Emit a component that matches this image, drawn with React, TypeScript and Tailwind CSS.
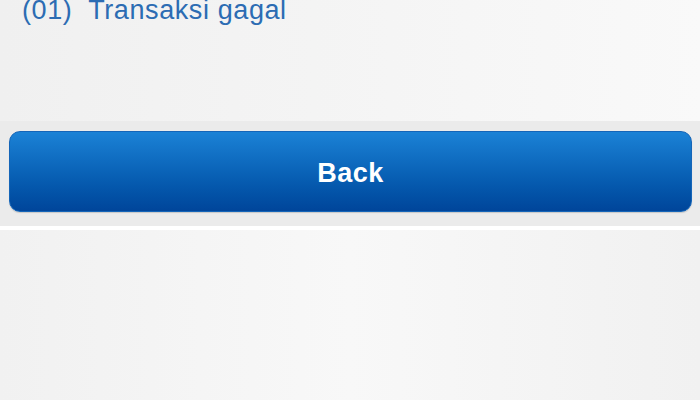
export default function App() {
  return (
    <div className="w-[700px] h-[400px] overflow-hidden flex flex-col bg-[#f7f7f7]" style={{ fontFamily: '"Liberation Sans", Arial, sans-serif' }}>
      <div className="h-[121px] bg-gradient-to-r from-[#f0f0f0] to-[#f9f9f9] pl-[22px]">
        <div className="text-[27px] leading-[27px] text-[#2c6cb3] mt-[-3px] tracking-[0.6px] whitespace-pre">(01)  Transaksi gagal</div>
      </div>
      <div className="h-[105px] bg-[#ebebeb] pt-[10px] pl-[9px] pr-[8px]">
        <div className="h-[81px] rounded-[11px] bg-gradient-to-b from-[#1b82d6] to-[#00459a] border border-[#1565b8] flex items-center justify-center pt-[4px] shadow-[0_1px_1px_rgba(0,0,0,0.15)]">
          <span className="text-white text-[27px] font-bold tracking-[0.5px]">Back</span>
        </div>
      </div>
      <div className="h-[4px] bg-white" />
      <div className="flex-1 bg-gradient-to-r from-[#f1f1f1] via-[#f8f8f8] to-[#f1f1f1]" />
    </div>
  );
}
